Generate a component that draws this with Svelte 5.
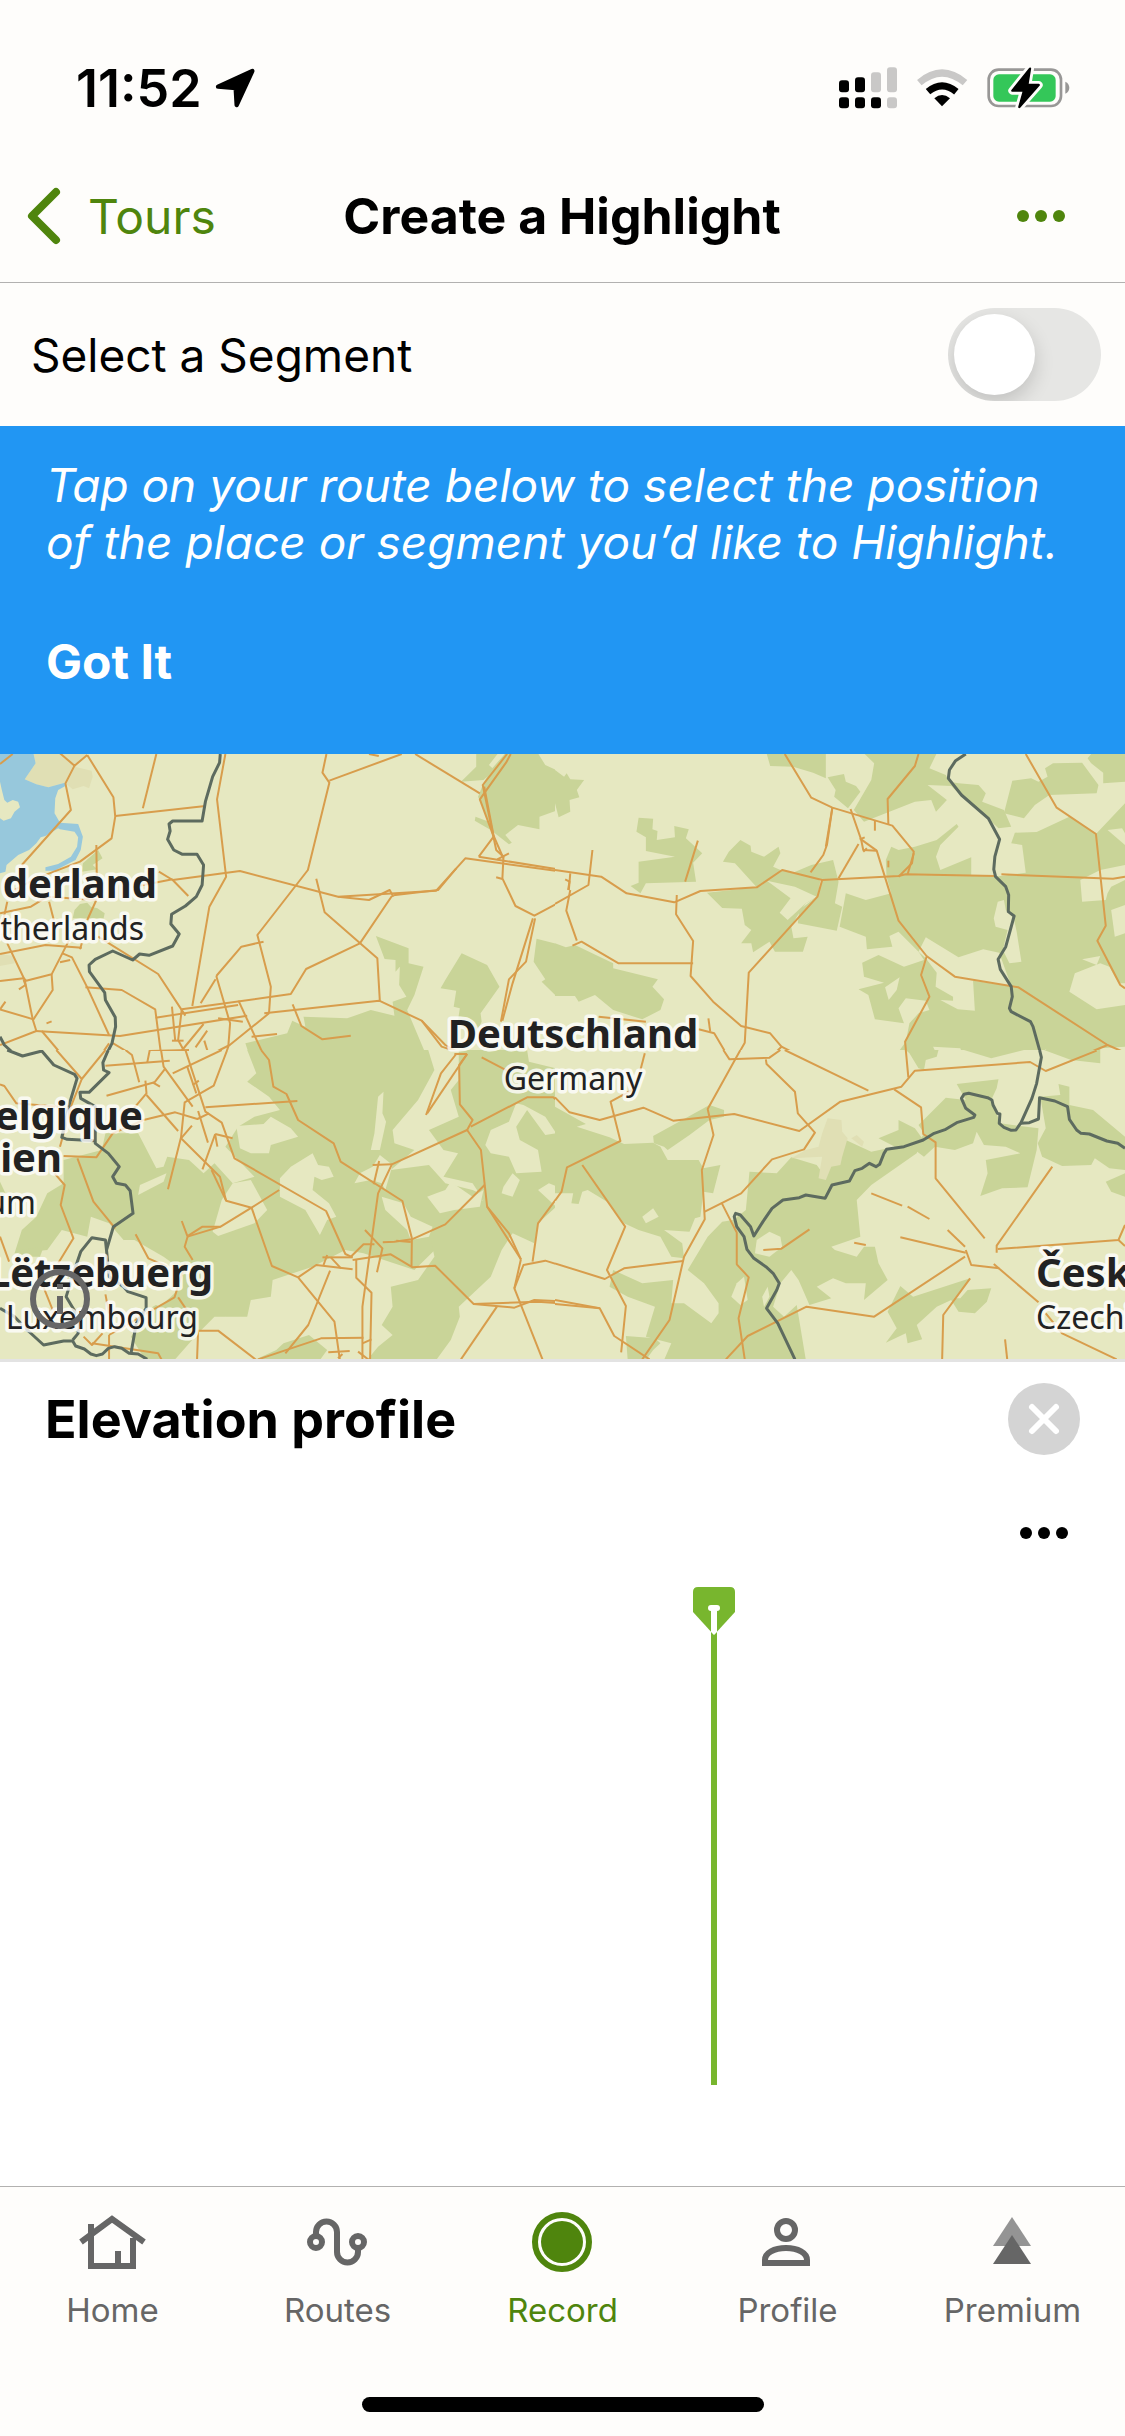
<script>
  let segment = $state(false);
  let showHint = $state(true);
  let active = $state('Record');
  const markerPosition = 63.47;

  const tabs = ['Home', 'Routes', 'Record', 'Profile', 'Premium'];

  // The map is made of four tiles, each with its own drawing units.
  const tiles = [
    {
      x: 0, y: -4, h: 310, units: 930,
      forest: [
        '270,300 282,325 255,345 268,358 225,365 228,340',
        '220,462 240,458 250,470 268,475 288,490 285,505 200,505 205,480',
        '1310,10 1370,10 1345,45 1360,60 1330,90 1268,95 1310,50',
        '1390,10 1480,10 1500,45 1530,60 1530,85 1568,90 1568,170 1540,200 1530,182 1484,200 1484,238 1425,225 1390,255 1408,278 1400,283 1350,240 1306,212 1308,200 1345,215 1315,140 1330,100 1350,60',
        '1034,558 1124,595 1124,640 1165,650 1140,735 1120,780 1178,930 690,930 675,880 790,850 804,812 840,830 835,800 955,805 1020,780 1085,797 1080,755 1118,740 1098,705 1100,650 1088,665 1088,630 1058,627',
        '1270,610 1340,645 1374,710 1322,790 1325,815 1300,870 1260,810 1265,775 1248,770 1255,722 1212,715 1225,690',
        '1476,566 1568,592 1568,738 1530,738 1490,695 1500,688 1468,635',
        '1300,905 1450,900 1450,930 1270,930'
      ],
      sand: ['92,10 98,40 68,88 100,103 133,112 178,98 200,118 230,108 245,115 255,80 252,62 205,50 240,10', '0,612 40,618 40,640 0,648'],
      water: ['0,10 92,10 98,40 68,88 100,103 133,112 178,98 180,108 160,120 152,145 150,190 165,218 215,222 228,260 222,300 208,330 150,362 125,362 125,352 160,342 195,320 212,290 215,262 205,245 165,238 160,235 125,258 112,262 100,280 80,300 50,315 18,345 15,365 0,370'],
      clearing: ['0,95 5,120 12,150 20,158 35,150 50,155 55,172 40,185 30,205 10,212 0,205'],
      roads: [
        '0,42 35,12', '165,10 205,47 240,15', '205,47 180,100 195,180 60,345', '240,15 312,142 317,200 307,265 220,335 100,385 40,420', '430,12 393,175', '317,198 565,168', '265,285 267,440',
        '620,12 597,148 622,380 576,470 529,768', '475,390 660,363 930,440 1015,450 1072,420 1082,440', '930,440 1200,422 1280,325 1568,368', '1082,436 1205,420 1255,355', '1317,320 1568,364', '437,365 475,390 518,438', '380,408 475,388',
        '898,12 887,68 906,98 847,360 708,555 745,710 740,790', '906,92 1105,12', '1015,12 1042,18', '1142,12 1320,130', '1395,12 1328,105 1365,300 1385,320 1382,385 1418,468 1470,497 1568,440', '1405,12 1392,38 1320,148 1358,260 1317,320', '1332,110 1358,258 1385,325', '1368,328 1400,310', '1365,382 1382,387',
        '870,386 893,487 1038,625 1045,755', '1078,438 990,580 842,657 800,732 500,778', '725,575 664,590 595,678', '593,688 552,760', '595,678 633,820 628,890 615,930', '727,790 1043,752 1160,812 1215,890 1285,915', '1160,812 1225,885 1290,925', '1472,505 1447,635 1400,688 1378,815', '1466,505 1410,700 1382,812', '1568,385 1555,480 1568,530',
        '805,763 829,828 887,868 965,857', '428,803 655,765', '98,843 330,858 680,797', '235,712 335,720 427,778 445,930', '240,712 300,855', '308,878 365,915 368,930', '300,880 268,930', '0,612 125,585 225,593', '20,580 68,690 90,808 100,843 0,885', '0,693 65,685 72,692 142,673 195,560', '142,673 145,720 92,808 0,778', '172,610 198,622 240,712', '165,637 193,630', '115,843 182,930',
        '270,560 435,672 510,797', '500,778 490,870 520,930', '473,770 482,872', '473,872 505,872', '560,822 490,915', '570,842 538,892', '562,872 577,925', '600,805 668,815', '656,752 725,915', '740,790 632,885 550,930', '692,860 762,852', '404,930 412,903 520,900', '0,490 85,470 130,440 265,450 240,510', '135,455 148,510', '20,455 5,530', '0,778 15,755', '128,820 142,814', '65,690 70,705 52,718', '220,598 225,580'
      ],
      borders: [
        '606,12 604,38 585,80 565,155 556,213 475,213 465,222 468,243 461,268 478,300 502,313 542,313 560,345 556,405 540,440 510,468 472,493 470,522 493,552 475,588 410,616 384,612 365,630 310,603 262,628 245,645 246,665 288,728 290,750 317,802 318,830 308,880 285,930',
        '0,860 12,885 35,908 62,918 112,905 122,912 132,930'
      ]
    },
    {
      x: 555, y: -4, h: 310, units: 930,
      forest: [
        '0,60 25,80 32,70 42,88 80,90 60,120 67,142 40,150 42,185 10,202 0,160',
        '582,10 745,10 745,85 710,68 655,50 592,48',
        '230,203 270,206 268,238 282,243 280,270 330,262 328,228 368,238 360,265 405,310 380,338 388,395 250,400 235,430 208,408 230,398 230,335 330,320 250,303 250,262 224,245',
        '510,270 538,287 540,305 575,320 615,290 620,310 600,350 625,362 700,378 730,392 722,440 690,460 665,500 650,530 656,565 695,560 682,605 605,605 590,575 545,607 540,580 512,580 540,540 522,525 514,476 460,474 418,428 555,412 495,340 462,335 478,305',
        '705,345 765,330 780,395 770,460 790,470 775,542 668,520 672,480 720,440 735,390 640,375',
        '750,82 795,72 800,95 828,108 840,125 806,175 768,140 772,120',
        '850,10 1050,10 1030,55 1075,75 1085,95 1110,100 1165,105 1185,130 1175,155 1235,180 1255,230 1220,235 1190,205 1120,140 1090,108 1025,105 1078,150 1048,185 1035,150 990,155 850,215 822,180 870,90 878,40',
        '910,330 925,290 945,300 990,290 1050,270 1105,222 1110,230 1060,285 1048,320 1060,360 1145,322 1145,375 1210,380 1295,368 1285,285 1255,280 1265,248 1325,246 1415,200 1490,250 1568,160 1568,890 1500,895 1500,930 1370,925 1350,898 1330,920 1290,905 1120,910 1115,895 1040,890 1058,930 950,930 945,905 965,875 975,820 1000,790 1030,780 1020,752 965,745 945,775 960,820 880,808 862,735 835,718 905,698 850,680 845,638 890,615 960,650 1015,630 1000,605 945,545 920,558 928,590 858,598 855,560 783,530 800,430 855,450 925,430 912,380',
        '1258,92 1310,85 1330,95 1355,80 1348,55 1370,40 1450,38 1495,105 1490,130 1360,135 1320,165 1290,205 1235,190',
        '1475,12 1568,12 1568,95 1508,100 1508,68 1475,40 1465,25',
        '0,580 30,592 55,585 160,640 160,655 283,688 268,710 300,748 290,780 240,808 160,780 110,735 65,755 55,738 0,738'
      ],
      sand: [], water: [],
      clearing: [
        '583,392 648,445 618,488 640,510 690,460 720,440 660,410',
        '1020,562 1110,622 1178,598 1222,608 1255,708 1150,692 1155,782 1108,778 1060,750 1095,752 1095,740 1047,710 1050,668 1020,625 1000,605',
        '1218,455 1235,450 1240,480 1262,505 1270,545 1283,635 1250,640 1232,600 1245,540 1212,530 1207,505',
        '1445,390 1500,360 1568,345 1568,390 1530,410 1520,430 1515,450 1450,455',
        '1520,240 1560,235 1568,250 1568,285',
        '1530,480 1568,465 1568,550 1540,560',
        '1430,670 1500,640 1525,650 1550,700 1568,700 1568,765 1490,778 1415,725',
        '1450,628 1500,618 1490,645',
        '908,712 948,682 940,720 918,750'
      ],
      roads: [
        '0,360 127,380 197,430 328,457 400,423 555,412 625,360 735,390 945,378 965,373 1210,378', '1228,373 1535,386 1568,380', '103,300 92,405 0,462', '28,388 40,395 36,420', '42,370 38,420', '42,420 31,482 60,572', '393,272 358,395',
        '335,435 333,493 380,573 373,678 435,755 512,828 592,850 623,890 592,923 480,927 438,850 395,838', '48,587 73,575 175,640 380,640', '632,12 705,143 763,173 928,227 987,305 982,340 945,380', '763,173 748,285 738,315 703,367', '763,173 745,290', '1000,12 990,48 915,147 917,222', '880,212 880,242',
        '813,177 842,268 848,300 885,302 945,512 1022,618 1100,680 1275,712 1520,885 1568,908', '835,282 780,385', '842,268 885,302', '838,268 852,262', '848,305 858,295', '987,310 970,373', '735,390 722,440 533,668 522,878 495,930', '1022,620 1007,675 1030,740 963,875 968,930', '1295,12 1380,173 1488,252 1515,527 1492,572 1555,705 1568,715', '1520,885 1420,930', '422,805 427,845', '623,890 695,930', '120,800 250,815', '247,905 240,930', '917,332 917,352'
      ],
      borders: ['1130,12 1102,32 1085,60 1082,85 1118,135 1192,205 1223,268 1210,320 1207,358 1212,380 1240,410 1248,435 1247,485 1263,498 1240,590 1219,628 1225,658 1255,710 1258,740 1250,775 1255,785 1308,815 1315,830 1338,920 1340,930']
    },
    {
      x: 0, y: 296, h: 320, units: 960,
      forest: [
        '680,0 1178,0 1195,60 1150,150 1080,240 1085,280 1140,300 1075,360 1180,345 1225,400 1300,420 1340,440 1290,480 1190,560 1196,600 1140,660 1000,610 950,600 860,650 750,690 745,740 690,750 680,800 590,800 545,850 480,930 400,930 360,860 420,770 470,740 500,680 440,640 340,570 300,520 250,500 240,560 170,540 130,600 40,610 60,540 100,500 130,430 175,400 175,330 280,300 290,250 380,250 430,355 450,350 460,320 520,330 560,370 590,340 640,400 700,380 620,290 655,230 700,200 770,180 740,140 680,95 705,70',
        '1262,0 1450,0 1455,35 1568,65 1568,425 1510,400 1480,420 1530,470 1480,520 1470,580 1410,550 1380,600 1350,680 1262,770 1265,800 1240,870 1200,930 1010,930 1040,890 1080,855 1050,825 1080,770 1075,710 1150,690 1195,620 1180,540 1250,480 1330,450 1300,400 1220,380 1260,310 1220,300 1180,240 1262,200 1240,120 1262,90',
        '780,880 850,855 900,900 880,930 700,930 760,900',
        '0,395 15,430 0,440', '60,600 120,590 110,620 45,620'
      ],
      sand: [], water: [],
      clearing: [
        '650,228 725,222 745,200 800,235 820,260 745,285 740,310 690,310 660,295',
        '770,385 800,350 860,310 875,345 905,350 918,380 885,390 865,380 860,420 905,460 925,500 900,510 880,555 840,480 770,440',
        '585,545 610,450 640,400 690,390 735,480 700,520 600,558',
        '1040,140 1055,125 1052,190 1062,215 1045,300 1020,300 1030,250',
        '975,400 990,370 1025,350 1045,315 1080,345 1060,420 1050,400 1020,390',
        '1050,440 1110,460 1130,500 1190,530 1180,560 1130,570 1120,540 1060,480',
        '1335,285 1350,240 1400,215 1420,160 1440,165 1500,200 1530,250 1500,255 1450,180 1420,230 1430,270 1480,300 1490,365 1420,370 1400,320 1350,310',
        '1225,420 1240,395 1300,440 1330,420 1320,470 1250,480 1210,490 1175,440 1200,430',
        '1385,410 1410,370 1430,390 1410,440 1380,430',
        '385,405 458,370 450,395 380,435',
        '585,830 620,800 630,820 660,820 655,845 600,840',
        '340,570 370,570 450,620 500,660 490,720 440,770 340,720'
      ],
      roads: [
        '175,318 265,322 310,250 395,210 482,187 543,207 575,190', '155,0 225,87 195,170 165,290', '290,0 225,87', '0,103 12,108 45,160 160,170', '345,0 363,15 383,97', '520,0 412,0 405,38', '290,47 467,32', '443,0 450,50 530,170', '293,137 425,97 455,55', '420,97 440,110', '400,92 403,130 368,175', '403,135 490,243', '610,0 475,70', '625,0 588,107 508,157 498,262 462,418',
        '510,0 565,185 610,218 645,325 897,483 950,612 970,622', '515,50 540,130', '530,105 547,92', '565,172 818,153', '545,183 572,278', '528,227 498,265 605,380 622,452 692,473 768,420', '582,360 622,452', '592,252 640,265', '592,252 557,358', '592,255 598,290', '500,513 516,560 508,590 530,630', '518,557 557,530 607,530 692,473', '692,473 748,648 820,682 920,815 935,930', '607,530 516,560',
        '718,0 740,30 752,110 788,132 820,210 918,280 937,335 1107,453 1133,565 1132,650', '1025,345 1078,343 1285,240 1323,300 1340,470 1433,628', '1433,628 1415,715 1493,930', '1078,343 1040,430 997,770 997,930', '1043,333 1028,403', '1250,12 1285,12', '1255,12 1213,70 1172,195', '1285,12 1263,45 1265,163 1300,210 1285,240', '1285,12 1175,190', '1325,22 1400,65', '1295,230 1450,142 1522,142 1568,188',
        '1333,405 1225,523 1133,568 1085,575 1053,577', '1090,572 1130,576', '1004,540 1052,595 1037,667', '887,622 970,622', '970,630 1075,613 1135,652 1197,647 1303,762 1480,755 1568,762', '1303,762 1415,773 1470,750 1568,755', '820,682 870,645 970,658', '908,662 848,825 785,910', '980,630 980,683 1022,728 1018,930', '705,930 600,842 545,842 542,930', '710,928 883,865 1000,863', '903,907 962,903', '930,925 942,912', '985,905 1015,930', '997,880 1022,868',
        '1367,770 1268,928', '1415,715 1440,645 1500,632 1568,655', '1465,635 1480,520 1543,428 1558,350 1568,345', '1340,470 1400,550 1433,628', '213,325 257,455 317,535', '150,370 178,405 167,465 202,565 160,640', '373,553 408,625 460,650', '120,712 145,780', '0,560 25,635', '230,860 253,885 282,850', '300,855 300,930', '253,880 435,910 445,930', '300,855 480,742 510,640', '490,742 520,790', '290,733 300,790', '965,620 1000,583 1030,583', '890,645 900,615', '910,622 938,655'
      ],
      borders: [
        '20,0 62,18 115,3 148,45 205,73 212,85 190,165 170,262 185,268 262,272',
        '298,0 283,38 285,60 300,68 245,127 220,127 222,145 262,170 262,280 298,310 328,350 310,380 320,400 345,405 358,422 366,490 312,530 293,600 300,680 340,710 352,725 402,743 402,775 375,820 360,912',
        '293,600 290,570 253,563 222,605 205,660 182,740 215,800 215,850 200,870',
        '0,775 40,800 75,840 120,885 175,873 200,873 208,888 232,897 250,912 265,917 282,912 298,895 315,890 335,895 355,910 380,912 405,928'
      ]
    },
    {
      x: 555, y: 296, h: 320, units: 960,
      forest: [
        '0,170 85,222 60,230 150,262 190,282 270,278 290,290 310,330 395,330 408,355 455,345 435,430 408,425 400,500 385,505 370,545 300,540 350,580 355,625 320,620 290,560 230,540 190,520 150,460 90,420 75,425 65,462 45,460 50,430 0,430',
        '270,258 425,165 465,180 465,200 425,210 370,255 310,300 300,290 272,280',
        '535,365 610,370 650,322 720,345 740,375 800,270 870,305 935,290 890,265 945,240 945,210 990,235 1010,265 995,310 870,405 830,450 840,560 760,590 770,600 830,620 850,590 880,590 890,640 915,690 850,750 855,700 800,700 765,685 720,710 760,745 700,765 670,690 650,660 620,700 600,770 630,800 665,765 690,930 300,930 320,880 250,860 275,770 200,740 150,710 160,660 240,700 325,690 320,760 355,760 430,820 450,790 450,760 410,700 365,660 420,560 460,515 490,510 525,480',
        '1015,320 990,300 1015,250 1000,225 1075,143 1130,150 1105,102 1220,88 1215,115 1200,150 1225,220 1330,235 1325,300 1300,412 1230,415 1170,438 1190,370 1185,330 1280,310 1240,290 1180,285 1160,245 1150,280 1100,300 1045,290',
        '1335,140 1390,135 1385,102 1415,110 1415,165 1480,180 1568,260 1568,360 1525,355 1485,325 1475,345 1395,348 1340,320 1328,280 1350,235',
        '1568,370 1515,395 1530,425 1568,440',
        '950,708 985,740 1142,685 1100,745 1115,745 1135,720 1200,715 1188,755 1155,790 1110,785 1090,750 1050,770 995,825 1010,868 970,880 965,850 910,878 940,835 915,785',
        '965,0 1055,0 1050,20 1020,30 1015,60 1000,55 975,10', '1125,0 1290,0 1200,25', '1345,0 1500,0 1500,40 1420,30',
        '195,858 275,865 290,880 270,900 250,930 200,930'
      ],
      sand: ['750,205 788,210 790,245 805,265 790,320 785,345 760,350 745,390 725,385 735,320 650,325 690,300 725,290 735,250', '815,265 830,255 850,275 845,290'],
      water: [],
      clearing: ['240,500 270,475 285,500 250,520', '555,570 590,545 620,560 625,590 590,620 550,610', '485,740 500,700 520,680 530,750 510,765', '570,740 585,710 590,740 575,770'],
      roads: [
        '0,142 40,187 123,210 243,173 325,212 493,192 672,243 785,155 953,110 990,62 1307,36 1350,63 1490,2', '247,10 235,60', '215,118 153,155 180,273 33,352 18,425 0,452', '75,345 193,530 143,660 195,768 182,907', '463,0 480,28 590,23 620,0', '510,0 420,177 436,255 404,360 412,508 355,620 315,810 240,928', '580,28 582,42 660,125 668,190 715,248 685,298 597,328 512,430 412,485', '632,0 862,122', '965,0 972,82', '933,118 1007,172 1013,252 1047,277 1047,385 1182,565',
        '458,458 500,548 500,643 533,682 505,805 522,928', '0,640 137,687 190,655 352,633', '0,750 123,775 163,858 260,928', '0,762 123,775', '573,600 623,596 700,538', '470,928 530,858 692,770 878,800 1128,620', '870,430 955,467', '970,470 1030,507', '1080,540 1128,590', '950,562 1130,608', '1130,600 1145,645 1222,655', '1368,350 1215,587 1215,608', '1218,597 1550,570 1568,525', '1207,642 1330,757', '1350,790 1395,850 1545,928', '1142,685 1068,795 1065,928', '1238,868 1244,928', '823,578 855,585', '1550,570 1568,588'
      ],
      borders: [
        '1333,0 1338,22 1325,100 1312,145 1282,218 1268,240 1255,241 1235,232 1222,220 1224,192 1217,190 1205,165 1202,150 1190,143 1138,130 1125,133 1118,145 1130,175 1155,195 1152,202 1105,218 1075,238 1043,250 1013,270 960,290 912,298 905,310 893,343 883,350 865,340 845,355 825,362 810,393 762,405 743,445 690,435 672,443 627,450 597,475 572,515 547,558 538,530 510,495 497,490 493,500 500,530 520,560 528,598 547,625 580,650 600,670 617,700 610,720 582,775 613,820 650,905 660,928',
        '1280,220 1305,218 1330,207 1333,143 1375,153 1410,170 1415,208 1435,240 1447,250 1470,252 1518,273 1548,280 1568,295'
      ]
    }
  ];

  const places = [
    { text: 'derland', x: 157, y: 144, anchor: 'end', big: true },
    { text: 'Netherlands', x: 144, y: 186, anchor: 'end' },
    { text: 'Deutschland', x: 573, y: 294, anchor: 'middle', big: true },
    { text: 'Germany', x: 573, y: 336, anchor: 'middle' },
    { text: 'Belgique', x: 143, y: 376, anchor: 'end', big: true },
    { text: 'ien', x: 62, y: 418, anchor: 'end', big: true },
    { text: 'Belgium', x: 36, y: 460, anchor: 'end' },
    { text: 'Lëtzebuerg', x: 213, y: 533, anchor: 'end', big: true },
    { text: 'Luxembourg', x: 198, y: 575, anchor: 'end' },
    { text: 'Česko', x: 1036, y: 533, anchor: 'start', big: true },
    { text: 'Czechia', x: 1036, y: 575, anchor: 'start' }
  ];
</script>

<div class="screen">
  <div class="status">
    <div class="clock">
      <span>11:52</span>
      <svg width="43" height="42" viewBox="610 55 129 126" aria-hidden="true">
        <path d="M622 114 725 67 678 169 675 118Z" fill="#000" stroke="#000" stroke-width="13" stroke-linejoin="round" />
      </svg>
    </div>
    <div class="signals" aria-hidden="true">
      <svg width="58" height="44" viewBox="60 50 174 132">
        <g fill="#c9c8c7">
          <rect x="156" y="69" width="30" height="60" rx="9" />
          <rect x="204" y="54" width="30" height="75" rx="9" />
          <rect x="204" y="144" width="30" height="33" rx="9" />
        </g>
        <rect x="60" y="93" width="30" height="36" rx="9" />
        <rect x="108" y="84" width="30" height="45" rx="9" />
        <rect x="60" y="144" width="30" height="33" rx="9" />
        <rect x="108" y="144" width="30" height="33" rx="9" />
        <rect x="156" y="144" width="30" height="33" rx="9" />
      </svg>
      <svg width="52" height="44" viewBox="289 50 156 132">
        <path d="M299 100Q367 42 436 100" fill="none" stroke="#c9c8c7" stroke-width="21" />
        <path d="M325 127Q367 92 410 127" fill="none" stroke="#000" stroke-width="21" />
        <path d="M344 147Q367 127 391 147L367 171Z" />
      </svg>
      <svg width="83" height="44" viewBox="500 50 249 132">
        <rect x="505" y="61" width="217" height="109" rx="30" fill="none" stroke="#989796" stroke-width="8" />
        <path d="M735 97C751 104 751 126 735 133Z" fill="#989796" />
        <rect x="519" y="75" width="187" height="82" rx="17" fill="#34c759" />
        <path d="M629 58 576 124H611L597 173 655 107H621Z" stroke="#fefdfb" stroke-width="24" stroke-linejoin="round" />
        <path d="M629 58 576 124H611L597 173 655 107H621Z" stroke="#000" stroke-width="7" stroke-linejoin="round" />
      </svg>
    </div>
  </div>

  <header class="nav">
    <a class="back" href="#tours">
      <svg width="34" height="58" viewBox="0 0 34 58" aria-hidden="true">
        <path d="M29 5 5 29 29 53" fill="none" stroke="currentColor" stroke-width="8" stroke-linecap="round" stroke-linejoin="round" />
      </svg>
      <span>Tours</span>
    </a>
    <h1>Create a Highlight</h1>
    <button class="more green" aria-label="More options"><i></i><i></i><i></i></button>
  </header>

  <label class="segment">
    <span>Select a Segment</span>
    <input type="checkbox" role="switch" bind:checked={segment} />
  </label>

  {#if showHint}
    <section class="hint">
      <p>Tap on your route below to select the position of the place or segment you’d like to Highlight.</p>
      <button onclick={() => (showHint = false)}>Got It</button>
    </section>
  {/if}

  <section class="map" aria-label="Map">
    <svg class="canvas" viewBox="0 0 1125 605" preserveAspectRatio="xMidYMid slice">
      {#each tiles as tile}
        <svg x={tile.x} y={tile.y} width="570" height={tile.h} viewBox="0 0 1568 {tile.units}" preserveAspectRatio="none">
          <rect class="land" width="1568" height={tile.units} />
          {#each tile.forest as points}<polygon class="forest" {points} />{/each}
          {#each tile.sand as points}<polygon class="sand" {points} />{/each}
          {#each tile.water as points}<polygon class="water" {points} />{/each}
          {#each tile.clearing as points}<polygon class="land" {points} />{/each}
          {#each tile.roads as points}<polyline class="road" {points} />{/each}
          {#each tile.borders as points}<polyline class="border" {points} />{/each}
        </svg>
      {/each}
      {#each places as place}
        <text class:big={place.big} x={place.x} y={place.y} text-anchor={place.anchor}>{place.text}</text>
      {/each}
    </svg>
    <button class="info" aria-label="Map information">
      <svg width="60" height="60" viewBox="0 0 60 60">
        <circle cx="30" cy="30" r="27" fill="none" stroke="#666" stroke-width="6" />
        <path d="M27 15h6v5h-6zM27 27h6v18h-6z" fill="#666" />
      </svg>
    </button>
  </section>

  <section class="elevation">
    <div class="heading">
      <h2>Elevation profile</h2>
      <button class="close" aria-label="Close">
        <svg width="72" height="72" viewBox="0 0 72 72">
          <path d="M24 24 48 48M48 24 24 48" stroke="#fff" stroke-width="6" stroke-linecap="round" />
        </svg>
      </button>
    </div>
    <div class="tools">
      <button class="more" aria-label="Profile options"><i></i><i></i><i></i></button>
    </div>
    <div class="chart">
      <div class="marker" style="left: {markerPosition}%">
        <svg width="42" height="48" viewBox="0 0 42 48" aria-hidden="true">
          <path d="M5 0H37Q42 0 42 5V25L21 48 0 25V5Q0 0 5 0Z" fill="#78b62e" />
          <path d="M18 18h6a3 3 0 0 1 0 6V45l-3 3-3-3V24a3 3 0 0 1 0-6Z" fill="#fff" />
        </svg>
      </div>
    </div>
  </section>

  <nav class="tabs">
    {#each tabs as tab}
      <a href="#{tab.toLowerCase()}" class:active={active === tab} onclick={() => (active = tab)}>
        <svg width="72" height="72" viewBox="0 0 72 72" fill="none" stroke="currentColor" stroke-width="6" aria-hidden="true">
          {#if tab === 'Home'}
            <path d="M4 36 35 13 67 36M14 18V60H56V32M41 45V60" />
          {:else if tab === 'Routes'}
            <circle cx="14" cy="36" r="6" />
            <circle cx="56" cy="36" r="6" />
            <path d="M14 30V26a10.5 10.5 0 0 1 21 0V46a10.5 10.5 0 0 0 21 0V42" />
          {:else if tab === 'Record'}
            <circle cx="35" cy="36" r="27" />
            <circle cx="35" cy="36" r="21" fill="currentColor" stroke="none" />
          {:else if tab === 'Profile'}
            <circle cx="34" cy="24" r="9" />
            <path d="M13 57V54C13 47 22 42 34 42S55 47 55 54V57Z" />
          {:else}
            <path d="M35 11 54 40H16Z" fill="#949494" stroke="none" />
            <path d="M35 29 54 58H16Z" fill="currentColor" stroke="none" />
          {/if}
        </svg>
        <span>{tab}</span>
      </a>
    {/each}
  </nav>
  <div class="home-bar"><span></span></div>
</div>

<style>
  :global(body) {
    margin: 0;
  }
  .screen {
    display: flex;
    flex-direction: column;
    min-height: 100vh;
    background: #fefdfb;
    color: #000;
    font-family: Inter, 'Liberation Sans', sans-serif;
    font-size: 46px;
  }
  button {
    padding: 0;
    border: 0;
    background: none;
    font: inherit;
    color: inherit;
    cursor: pointer;
  }
  a {
    color: inherit;
    text-decoration: none;
  }
  h1,
  h2,
  p {
    margin: 0;
  }
  svg {
    display: block;
  }
  .status {
    display: flex;
    align-items: center;
    justify-content: space-between;
    height: 124px;
    padding: 26px 55px 0 76px;
  }
  .clock {
    display: flex;
    align-items: center;
    gap: 12px;
    font-size: 52px;
    font-weight: 600;
  }
  .signals {
    display: flex;
    gap: 19px;
  }
  .nav {
    display: grid;
    grid-template-columns: 1fr auto 1fr;
    align-items: center;
    height: 132px;
    padding: 0 60px 0 27px;
    border-bottom: 1px solid #b2b1b0;
  }
  .back {
    display: flex;
    align-items: center;
    gap: 27px;
    color: #4f850d;
    font-size: 48px;
  }
  h1 {
    margin-left: 32px;
    font-size: 50px;
    font-weight: 700;
  }
  .more {
    display: flex;
    justify-self: end;
    gap: 6px;
    padding: 20px 0;
  }
  .more i {
    width: 12px;
    height: 12px;
    border-radius: 50%;
    background: currentColor;
  }
  .green {
    color: #4f850d;
  }
  .segment {
    display: flex;
    align-items: center;
    justify-content: space-between;
    height: 143px;
    padding: 0 24px 0 31px;
  }
  .segment input {
    box-sizing: border-box;
    width: 153px;
    height: 93px;
    margin: 0;
    padding: 6px;
    border-radius: 47px;
    background: #e6e6e4;
    overflow: hidden;
    appearance: none;
  }
  .segment input::before {
    content: '';
    display: block;
    width: 81px;
    height: 81px;
    border-radius: 50%;
    background: #fff;
    box-shadow: 0 8px 20px rgba(0, 0, 0, 0.16);
  }
  .segment input:checked {
    background: #78b62e;
  }
  .segment input:checked::before {
    margin-left: auto;
  }
  .hint {
    display: flex;
    flex-direction: column;
    align-items: flex-start;
    gap: 62px;
    padding: 31px 46px 64px;
    background: #2196f3;
    color: #fff;
    line-height: 57px;
  }
  .hint p {
    font-style: italic;
  }
  .hint button {
    font-size: 48px;
    font-weight: 700;
  }
  .map {
    position: relative;
    border-bottom: 3px solid #e3e3e3;
  }
  .canvas {
    width: 100%;
    height: 605px;
  }
  .land {
    fill: #e6e8c1;
  }
  .forest {
    fill: #c9d498;
  }
  .sand {
    fill: #e0dfb4;
  }
  .water {
    fill: #97c8dc;
  }
  .road,
  .border {
    fill: none;
    stroke: #d89d4c;
    stroke-width: 2px;
    stroke-linejoin: round;
    vector-effect: non-scaling-stroke;
  }
  .border {
    stroke: #5d6b5f;
    stroke-width: 3px;
  }
  text {
    fill: #222;
    stroke: rgba(255, 255, 255, 0.8);
    stroke-width: 7px;
    stroke-linejoin: round;
    paint-order: stroke;
    font-family: 'Noto Sans', sans-serif;
    font-size: 32px;
  }
  text.big {
    font-size: 40px;
    font-weight: 700;
  }
  .info {
    position: absolute;
    left: 30px;
    bottom: 30px;
  }
  .elevation {
    display: flex;
    flex: 1;
    flex-direction: column;
    background: #fff;
  }
  .heading {
    display: flex;
    align-items: center;
    justify-content: space-between;
    padding: 21px 45px 0;
  }
  h2 {
    font-size: 52px;
    font-weight: 700;
  }
  .close {
    border-radius: 50%;
    background: #d4d4d4;
  }
  .tools {
    display: flex;
    justify-content: flex-end;
    padding: 52px 57px 0;
  }
  .chart {
    position: relative;
    height: 498px;
    margin-top: 28px;
  }
  .marker {
    position: absolute;
    top: 0;
    height: 498px;
    width: 42px;
    transform: translateX(-50%);
    background: linear-gradient(#78b62e, #78b62e) center 45px / 6px 100% no-repeat;
  }
  .tabs {
    display: grid;
    grid-template-columns: repeat(5, 1fr);
    padding-top: 19px;
    border-top: 1px solid #b2b1b0;
    color: #666;
    font-size: 33px;
    line-height: 40px;
  }
  .tabs a {
    display: flex;
    flex-direction: column;
    align-items: center;
    gap: 12px;
  }
  .tabs .active {
    color: #4f850d;
  }
  .home-bar {
    display: flex;
    justify-content: center;
    padding: 67px 0 24px;
  }
  .home-bar span {
    width: 402px;
    height: 15px;
    border-radius: 8px;
    background: #000;
  }
</style>
